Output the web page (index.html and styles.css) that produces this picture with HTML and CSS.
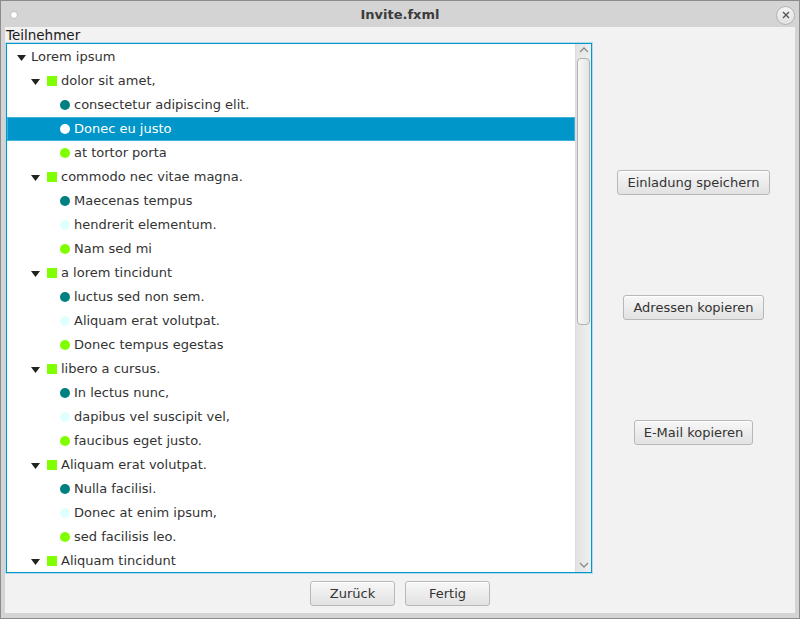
FILE: index.html
```html
<!DOCTYPE html>
<html>
<head>
<meta charset="utf-8">
<link rel="stylesheet" href="styles.css">
</head>
<body>
<div class="window">
  <div class="titlebar">
    <span class="dot"></span>
    <span class="title">Invite.fxml</span>
    <span class="close">
      <svg width="10" height="10" viewBox="0 0 10 10"><path d="M2 2 L8 8 M8 2 L2 8" stroke="#555" stroke-width="1.4" fill="none"/></svg>
    </span>
  </div>
  <div class="content">
    <div class="main">
      <div class="left">
        <div class="label">Teilnehmer</div>
        <div class="tree">
          <div class="rows">
            <div class="row l0"><svg class="arrow" width="9" height="6" viewBox="0 0 9 6"><path d="M0 0 H9 L4.5 6 Z" fill="#222"/></svg><span class="txt">Lorem ipsum</span></div>
            <div class="row l1"><svg class="arrow" width="9" height="6" viewBox="0 0 9 6"><path d="M0 0 H9 L4.5 6 Z" fill="#222"/></svg><span class="sq"></span><span class="txt">dolor sit amet,</span></div>
            <div class="row l2"><span class="dotc teal"></span><span class="txt">consectetur adipiscing elit.</span></div>
            <div class="row l2 sel"><span class="dotc white"></span><span class="txt">Donec eu justo</span></div>
            <div class="row l2"><span class="dotc green"></span><span class="txt">at tortor porta</span></div>
            <div class="row l1"><svg class="arrow" width="9" height="6" viewBox="0 0 9 6"><path d="M0 0 H9 L4.5 6 Z" fill="#222"/></svg><span class="sq"></span><span class="txt">commodo nec vitae magna.</span></div>
            <div class="row l2"><span class="dotc teal"></span><span class="txt">Maecenas tempus</span></div>
            <div class="row l2"><span class="dotc cyan"></span><span class="txt">hendrerit elementum.</span></div>
            <div class="row l2"><span class="dotc green"></span><span class="txt">Nam sed mi</span></div>
            <div class="row l1"><svg class="arrow" width="9" height="6" viewBox="0 0 9 6"><path d="M0 0 H9 L4.5 6 Z" fill="#222"/></svg><span class="sq"></span><span class="txt">a lorem tincidunt</span></div>
            <div class="row l2"><span class="dotc teal"></span><span class="txt">luctus sed non sem.</span></div>
            <div class="row l2"><span class="dotc cyan"></span><span class="txt">Aliquam erat volutpat.</span></div>
            <div class="row l2"><span class="dotc green"></span><span class="txt">Donec tempus egestas</span></div>
            <div class="row l1"><svg class="arrow" width="9" height="6" viewBox="0 0 9 6"><path d="M0 0 H9 L4.5 6 Z" fill="#222"/></svg><span class="sq"></span><span class="txt">libero a cursus.</span></div>
            <div class="row l2"><span class="dotc teal"></span><span class="txt">In lectus nunc,</span></div>
            <div class="row l2"><span class="dotc cyan"></span><span class="txt">dapibus vel suscipit vel,</span></div>
            <div class="row l2"><span class="dotc green"></span><span class="txt">faucibus eget justo.</span></div>
            <div class="row l1"><svg class="arrow" width="9" height="6" viewBox="0 0 9 6"><path d="M0 0 H9 L4.5 6 Z" fill="#222"/></svg><span class="sq"></span><span class="txt">Aliquam erat volutpat.</span></div>
            <div class="row l2"><span class="dotc teal"></span><span class="txt">Nulla facilisi.</span></div>
            <div class="row l2"><span class="dotc cyan"></span><span class="txt">Donec at enim ipsum,</span></div>
            <div class="row l2"><span class="dotc green"></span><span class="txt">sed facilisis leo.</span></div>
            <div class="row l1"><svg class="arrow" width="9" height="6" viewBox="0 0 9 6"><path d="M0 0 H9 L4.5 6 Z" fill="#222"/></svg><span class="sq"></span><span class="txt">Aliquam tincidunt</span></div>
          </div>
          <div class="scrollbar">
            <svg class="chev" width="10" height="6" viewBox="0 0 10 6"><path d="M1 5 L5 1 L9 5" stroke="#8a8a8a" stroke-width="1.3" fill="none"/></svg>
            <div class="track"><div class="thumb"></div></div>
            <svg class="chev" width="10" height="6" viewBox="0 0 10 6"><path d="M1 1 L5 5 L9 1" stroke="#8a8a8a" stroke-width="1.3" fill="none"/></svg>
          </div>
        </div>
      </div>
      <div class="side">
        <button class="btn">Einladung speichern</button>
        <button class="btn">Adressen kopieren</button>
        <button class="btn">E-Mail kopieren</button>
      </div>
    </div>
    <div class="bottom">
      <button class="btn wide">Zurück</button>
      <button class="btn wide">Fertig</button>
    </div>
  </div>
</div>
</body>
</html>
```

FILE: styles.css
```css
html, body {
  margin: 0;
  padding: 0;
}
body {
  width: 800px;
  height: 619px;
  font-family: "DejaVu Sans", sans-serif;
  font-size: 13px;
  color: #333333;
}
.window {
  box-sizing: border-box;
  width: 800px;
  height: 619px;
  background: #d4d4d4;
  border: 1px solid #8c8c8c;
  display: flex;
  flex-direction: column;
  padding: 0 4px 5px 4px;
}
.titlebar {
  height: 26px;
  display: flex;
  align-items: center;
}
.dot {
  width: 6px;
  height: 6px;
  border-radius: 50%;
  background: #ffffff;
  border: 1px solid #bdbdbd;
  margin-left: 5px;
  margin-top: 1px;
}
.title {
  flex: 1;
  text-align: center;
  font-weight: bold;
  font-size: 13px;
  color: #3c3c3c;
  padding-left: 6px;
  margin-top: 1px;
}
.close {
  width: 17px;
  height: 17px;
  border-radius: 50%;
  border: 1px solid #b4b4b4;
  background: linear-gradient(#f4f4f4, #e2e2e2);
  display: flex;
  align-items: center;
  justify-content: center;
  margin-top: 2px;
}
.content {
  flex: 1;
  background: #f2f2f2;
  display: flex;
  flex-direction: column;
}
.main {
  display: flex;
  flex: 1;
}
.left {
  display: flex;
  flex-direction: column;
  padding-left: 1px;
}
.label {
  height: 16px;
  line-height: 16px;
  font-size: 13.5px;
  color: #1a1a1a;
}
.tree {
  box-sizing: border-box;
  width: 586px;
  height: 530px;
  border: 1px solid #0596cc;
  box-shadow: 0 0 0 1px rgba(5, 150, 204, 0.25);
  background: #ffffff;
  display: flex;
}
.rows {
  flex: 1;
  overflow: hidden;
  padding-top: 1px;
}
.row {
  height: 24px;
  display: flex;
  align-items: center;
  white-space: nowrap;
}
.row.sel {
  background: #0096c9;
  color: #ffffff;
  box-shadow: inset 0 0 0 1px #3fb0da;
}
.l0 { padding-left: 10px; }
.l1 { padding-left: 24px; }
.l2 { padding-left: 53px; }
.arrow {
  flex: none;
  margin-top: 2px;
}
.l0 .arrow { margin-right: 5px; }
.l1 .arrow { margin-right: 7px; }
.sq {
  flex: none;
  width: 10px;
  height: 10px;
  background: #7fff00;
  margin-right: 4px;
}
.dotc {
  flex: none;
  width: 10px;
  height: 10px;
  border-radius: 50%;
  margin-right: 4px;
}
.teal { background: #008080; }
.cyan { background: #e0ffff; }
.green { background: #7fff00; }
.white { background: #ffffff; }
.txt {
  line-height: 24px;
}
.scrollbar {
  width: 16px;
  background: linear-gradient(to right, #e3e3e3, #efefef);
  border-left: 1px solid #dcdcdc;
  box-sizing: border-box;
  display: flex;
  flex-direction: column;
  align-items: center;
}
.chev {
  margin: 3px 0 4px 0;
}
.track {
  flex: 1;
  width: 100%;
  padding: 0 1px;
  box-sizing: border-box;
}
.thumb {
  box-sizing: border-box;
  height: 267px;
  margin-top: 1px;
  border: 1px solid #b0b0b0;
  border-radius: 4px;
  background: linear-gradient(to right, #f8f8f8, #e4e4e4);
}
.side {
  flex: 1;
  display: flex;
  flex-direction: column;
  align-items: center;
  gap: 100px;
  padding-top: 143px;
}
.btn {
  box-sizing: border-box;
  height: 25px;
  padding: 0 9px;
  font-family: "DejaVu Sans", sans-serif;
  font-size: 13px;
  color: #333333;
  border: 1px solid #b8b8b8;
  border-radius: 3px;
  background: linear-gradient(#f7f7f7, #e2e2e2);
  box-shadow: inset 0 1px 0 #ffffff;
}
.bottom {
  height: 39px;
  display: flex;
  justify-content: center;
  align-items: flex-start;
  gap: 10px;
  padding-top: 7px;
  box-sizing: border-box;
}
.wide {
  width: 85px;
}
```
